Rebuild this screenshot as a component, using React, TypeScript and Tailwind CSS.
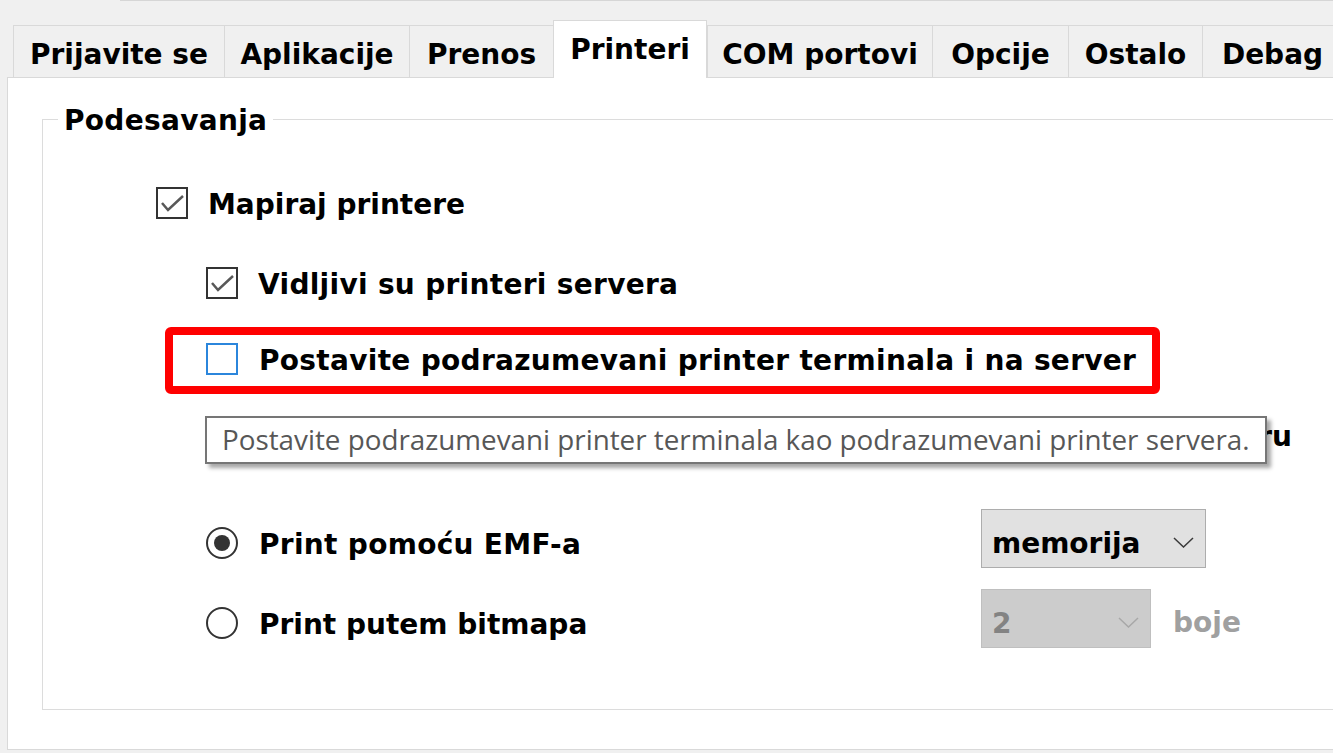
import React from "react";

function CheckBox({ checked, focus }: { checked?: boolean; focus?: boolean }) {
  return (
    <div
      className={`w-8 h-8 shrink-0 border-2 bg-white ${
        focus ? "border-[#2b86dc]" : "border-[#333333]"
      }`}
    >
      {checked && (
        <svg width="28" height="28" viewBox="0 0 28 28" className="block">
          <polyline
            points="4,14 10,21 25,7"
            fill="none"
            stroke="#585858"
            strokeWidth="2.5"
          />
        </svg>
      )}
    </div>
  );
}

function Radio({ checked }: { checked?: boolean }) {
  return (
    <div className="w-8 h-8 shrink-0 rounded-full border-2 border-[#333333] bg-white flex items-center justify-center">
      {checked && <div className="w-[16px] h-[16px] rounded-full bg-[#333333]" />}
    </div>
  );
}

function Label({ children, className = "" }: { children: React.ReactNode; className?: string }) {
  return (
    <span
      className={`h-8 pt-[2px] text-[28px] leading-[32px] font-bold text-black whitespace-nowrap ${className}`}
    >
      {children}
    </span>
  );
}

function Chevron({ color }: { color: string }) {
  return (
    <svg width="21" height="11" viewBox="0 0 21 11" className="block ml-auto mr-[11px] mt-[11px]">
      <polyline points="1,1 10.5,10 20,1" fill="none" stroke={color} strokeWidth="1.5" />
    </svg>
  );
}

const tabs: { label: string; w: string; selected?: boolean }[] = [
  { label: "Prijavite se", w: "w-[211px]" },
  { label: "Aplikacije", w: "w-[185px]" },
  { label: "Prenos", w: "w-[144px]" },
  { label: "Printeri", w: "w-[154px]", selected: true },
  { label: "COM portovi", w: "w-[225px]" },
  { label: "Opcije", w: "w-[136px]" },
  { label: "Ostalo", w: "w-[134px]" },
  { label: "Debag", w: "w-[140px]" },
];

export default function App() {
  return (
    <div className="relative w-[1333px] h-[753px] overflow-hidden bg-[#f0f0f0] font-['DejaVu_Sans',sans-serif] flex flex-col">
      {/* top line */}
      <div className="ml-[120px] h-px bg-[#d6d6d6] shrink-0" />

      {/* tabs */}
      <div className="mt-[19px] pl-[13px] h-[57px] flex items-end shrink-0">
        {tabs.map((t) =>
          t.selected ? (
            <div
              key={t.label}
              className={`${t.w} h-[58px] mb-[-1px] relative z-10 bg-white border-t border-l border-r border-[#d9d9d9] flex justify-center pt-[11px] shrink-0`}
            >
              <Label>{t.label}</Label>
            </div>
          ) : (
            <div
              key={t.label}
              className={`${t.w} h-[52px] bg-[#f0f0f0] border-t border-l border-[#d9d9d9] flex justify-center pt-[11px] shrink-0`}
            >
              <Label>{t.label}</Label>
            </div>
          )
        )}
      </div>

      {/* panel */}
      <div className="ml-[7px] w-[1400px] h-[673px] border border-[#d9d9d9] bg-white shrink-0">
        {/* group box */}
        <div className="relative ml-[34px] mt-[41px] w-[1400px] h-[591px] border border-[#dcdcdc] flex flex-col">
          <span className="absolute left-[15px] top-[-17px] px-[6px] bg-white h-8 pt-[2px] text-[28px] leading-[32px] font-bold text-black whitespace-nowrap tracking-[0.3px]">
            Podesavanja
          </span>

          {/* Row 1 */}
          <div className="mt-[67px] ml-[113px] flex items-start">
            <CheckBox checked />
            <Label className="ml-[20px]">Mapiraj printere</Label>
          </div>

          {/* Row 2 */}
          <div className="mt-[48px] ml-[163px] flex items-start">
            <CheckBox checked />
            <Label className="ml-[20px] tracking-[0.3px]">Vidljivi su printeri servera</Label>
          </div>

          {/* Row 3 highlighted */}
          <div className="mt-[28px] ml-[122px] w-[995px] h-[67px] border-[8px] border-[#ff0000] rounded-[6px] pl-[33px] pt-[8px] flex items-start">
            <CheckBox focus />
            <Label className="ml-[21px] tracking-[0.3px]">Postavite podrazumevani printer terminala i na server</Label>
          </div>

          {/* Row 4 (under tooltip) */}
          <div className="mt-[25px] ml-[163px] flex items-start">
            <CheckBox />
            <div className="ml-[20px] w-[1034px] flex justify-end overflow-hidden">
              <Label>Koristi podrazumevani printer terminala i kao podrazumevani na serveru</Label>
            </div>
          </div>

          {/* Radio 1 */}
          <div className="mt-[58px] ml-[163px] flex items-start">
            <div className="w-[775px] flex items-start mt-[18px]">
              <Radio checked />
              <Label className="ml-[21px] tracking-[0.3px]">Print pomoću EMF-a</Label>
            </div>
            <div className="w-[225px] h-[59px] border border-[#adadad] bg-[#e1e1e1] flex items-start pl-[10px] pt-[16px]">
              <Label>memorija</Label>
              <Chevron color="#3a3a3a" />
            </div>
          </div>

          {/* Radio 2 */}
          <div className="mt-[21px] ml-[163px] flex items-start">
            <div className="w-[775px] flex items-start mt-[18px]">
              <Radio />
              <Label className="ml-[21px]">Print putem bitmapa</Label>
            </div>
            <div className="w-[170px] h-[59px] border border-[#bfbfbf] bg-[#cccccc] flex items-start pl-[10px] pt-[16px]">
              <Label className="!text-[#838383]">2</Label>
              <Chevron color="#a8a8a8" />
            </div>
            <Label className="ml-[22px] mt-[16px] !text-[#a0a0a0]">boje</Label>
          </div>
        </div>
      </div>

      {/* tooltip */}
      <div className="absolute left-[205px] top-[416px] w-[1062px] h-[48px] border-2 border-[#767676] bg-white shadow-[4px_4px_4px_rgba(0,0,0,0.35)] pl-[15px] pt-[2px] z-20">
        <span className="font-['Open_Sans',sans-serif] text-[27.8px] leading-[38px] text-[#575757] whitespace-nowrap">
          Postavite podrazumevani printer terminala kao podrazumevani printer servera.
        </span>
      </div>
    </div>
  );
}
